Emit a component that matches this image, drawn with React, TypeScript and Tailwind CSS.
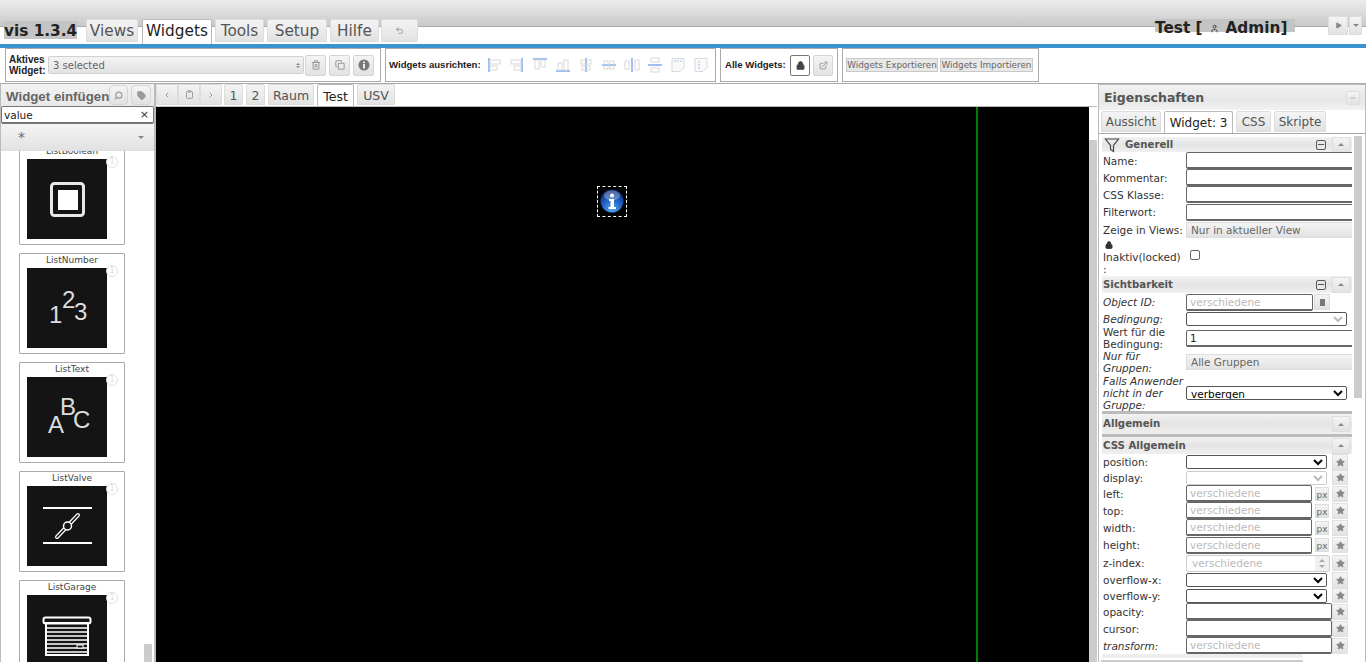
import React from "react";
import { Trash2, Copy, Lock, ExternalLink, Search, Tag, ChevronLeft, ChevronRight, Undo2, Play, User, Star, Minus, Clipboard } from "lucide-react";

const grad = "bg-[linear-gradient(#f4f4f4,#e2e2e2)]";

function TopTab({ w, label, active }: { w: number; label: React.ReactNode; active?: boolean }) {
  return (
    <div
      style={{ width: w }}
      className={
        active
          ? "h-[25px] pb-[2px] mr-[3px] bg-white border border-[#bbb] border-b-0 rounded-t-[2px] flex items-center justify-center text-[15.3px] text-[#222]"
          : `h-[23px] pt-[2px] mb-[2px] mr-[3px] ${grad} border border-[#ddd] rounded-t-[2px] flex items-center justify-center text-[15.3px] text-[#555]`
      }
    >
      {label}
    </div>
  );
}

function Btn({ w = 21, h = 21, children, dark }: { w?: number; h?: number; children?: React.ReactNode; dark?: boolean }) {
  return (
    <div
      style={{ width: w, height: h }}
      className={
        dark
          ? "bg-white border border-[#777] rounded-[2px] flex items-center justify-center text-[#444]"
          : `${grad} border border-[#d4d4d4] rounded-[2px] flex items-center justify-center text-[#999]`
      }
    >
      {children}
    </div>
  );
}

const blue = "#9cc0f2";
const gr = "#d8d8d8";
function AlignIcon({ kind }: { kind: number }) {
  const shapes: Record<number, React.ReactNode> = {
    0: <><rect x="2" y="1" width="2" height="14" fill={blue} /><rect x="4" y="3" width="10" height="4" fill="none" stroke={gr} /><rect x="4" y="9" width="7" height="4" fill="none" stroke={gr} /></>,
    1: <><rect x="12" y="1" width="2" height="14" fill={blue} /><rect x="2" y="3" width="10" height="4" fill="none" stroke={gr} /><rect x="5" y="9" width="7" height="4" fill="none" stroke={gr} /></>,
    2: <><rect x="1" y="1" width="14" height="2" fill={blue} /><rect x="3" y="3" width="4" height="9" fill="none" stroke={gr} /><rect x="9" y="3" width="4" height="7" fill="none" stroke={gr} /></>,
    3: <><rect x="1" y="13" width="14" height="2" fill={blue} /><rect x="3" y="6" width="4" height="7" fill="none" stroke={gr} /><rect x="9" y="3" width="4" height="10" fill="none" stroke={gr} /></>,
    4: <><rect x="7" y="1" width="2" height="14" fill={blue} /><rect x="3" y="3" width="10" height="4" fill="none" stroke={gr} /><rect x="4" y="9" width="8" height="4" fill="none" stroke={gr} /></>,
    5: <><rect x="1" y="7" width="14" height="2" fill={blue} /><rect x="3" y="4" width="4" height="8" fill="none" stroke={gr} /><rect x="9" y="4" width="4" height="8" fill="none" stroke={gr} /></>,
    6: <><rect x="7" y="1" width="2" height="14" fill={blue} /><rect x="1" y="4" width="4" height="8" fill="none" stroke={gr} /><rect x="11" y="3" width="4" height="10" fill="none" stroke={gr} /></>,
    7: <><rect x="1" y="7" width="14" height="2" fill={blue} /><rect x="4" y="1" width="8" height="4" fill="none" stroke={gr} /><rect x="4" y="11" width="8" height="4" fill="none" stroke={gr} /></>,
    8: <><path d="M2 1.5h12v9l-4 4H2z" fill="#fafafa" stroke={gr} /><path d="M4 4h8" stroke={blue} strokeDasharray="2 1" /></>,
    9: <><path d="M2 1.5h12v9l-4 4H2z" fill="#fafafa" stroke={gr} /><path d="M6 4v8" stroke={blue} strokeDasharray="2 1" /></>,
  };
  return <svg width="16" height="16" viewBox="0 0 16 16" className="w-[16px] h-[16px] mr-[7px] shrink-0">{shapes[kind]}</svg>;
}

function CenterTab({ w, label, active, big }: { w: number; label: React.ReactNode; active?: boolean; big?: boolean }) {
  const size = big ? "text-[12.5px] pt-[3px]" : "text-[12px]";
  return (
    <div
      style={{ width: w }}
      className={
        active
          ? `h-[22px] mr-[3px] bg-white border border-[#bbb] border-b-0 rounded-t-[2px] flex items-center justify-center ${size} text-[#222]`
          : `h-[21px] mb-[1px] mr-[3px] ${grad} border border-[#ddd] rounded-t-[2px] flex items-center justify-center ${size} text-[#555]`
      }
    >
      {label}
    </div>
  );
}

function Card({ name, children }: { name: string; children: React.ReactNode }) {
  return (
    <div className="relative w-[106px] h-[101px] mb-[8px] border border-[#aaa] rounded-[1px] shrink-0">
      <div className="h-[14px] text-[9px] leading-[13px] text-center text-[#444]">{name}</div>
      <div className="ml-[7px] w-[80px] h-[80px] bg-[#141414] overflow-hidden">{children}</div>
      <div className="absolute left-[86px] top-[11px] w-[12px] h-[12px] rounded-full border border-[#e2e2e2] text-[#ddd] text-[8px] leading-[10px] text-center">1</div>
    </div>
  );
}

function SectionHeader({ title, icon, minus, h = 17 }: { title: string; icon?: boolean; minus?: boolean; h?: number }) {
  return (
    <div style={{ height: h }} className="w-[250px] shrink-0 flex items-center bg-[linear-gradient(#f2f2f2,#e4e4e4_50%,#f0f0f0)] pr-[2px]">
      {icon && (
        <svg width="16" height="16" viewBox="0 0 16 16" className="ml-[2px] mr-[4px] shrink-0">
          <path d="M1.5 2h13L9.5 8.5V14.5L6.5 12.5V8.5z" fill="none" stroke="#444" strokeWidth="1.2" />
        </svg>
      )}
      <span className="ml-[1px] text-[10.2px] font-bold text-[#555]">{title}</span>
      <div className="flex-1" />
      {minus && (
        <div className="w-[10px] h-[10px] mr-[6px] border border-[#555] rounded-[2px] flex items-center justify-center">
          <div className="w-[6px] h-px bg-[#555]" />
        </div>
      )}
      <div className={`w-[18px] h-[16px] ${grad} border border-[#ddd] flex items-center justify-center`}>
        <div className="w-0 h-0 border-x-[3px] border-x-transparent border-b-[3px] border-b-[#888]" />
      </div>
    </div>
  );
}

function Row({ label, h = 17, italic, children }: { label: React.ReactNode; h?: number; italic?: boolean; children?: React.ReactNode }) {
  return (
    <div style={{ height: h }} className="w-[250px] shrink-0 flex items-center overflow-hidden">
      <div className={`w-[84px] shrink-0 pl-px text-[10.5px] leading-[12px] text-[#333] ${italic ? "italic" : ""}`}>{label}</div>
      <div className="flex-1 min-w-0 flex items-center">{children}</div>
    </div>
  );
}

function TextInput({ w = 180, value, ph, h = 17 }: { w?: number; value?: string; ph?: string; h?: number }) {
  return (
    <input
      readOnly
      value={value}
      placeholder={ph}
      style={{ width: w, height: h }}
      className="shrink-0 bg-white border border-[#666] border-b-[2px] rounded-[2px] px-[3px] text-[10.5px] text-[#222] placeholder:text-[#bbb] outline-none"
    />
  );
}

function PhInput({ w = 126 }: { w?: number }) {
  return <TextInput w={w} ph="verschiedene" />;
}

function Sel({ w, value = "", disabled, dark }: { w: number; value?: string; disabled?: boolean; dark?: boolean }) {
  return (
    <select
      disabled={disabled}
      defaultValue={value}
      style={{ width: w }}
      className={`h-[14px] shrink-0 bg-white border rounded-[2px] text-[10.5px] leading-[12px] text-black appearance-auto disabled:text-[#bbb] ${dark ? "border-[#555]" : "border-[#555] disabled:border-[#ccc]"}`}
    >
      <option value={value}>{value}</option>
    </select>
  );
}

function GreyField({ text }: { text: string }) {
  return (
    <div className={`w-[180px] h-[16px] ${grad} border-y border-l border-[#ddd] pl-[4px] text-[10.5px] leading-[14px] text-[#666] whitespace-nowrap`}>
      {text}
    </div>
  );
}

function StarBtn() {
  return (
    <div className={`ml-auto mr-[4px] w-[16px] h-[16px] ${grad} border border-[#e0e0e0] flex items-center justify-center shrink-0`}>
      <Star size={9} className="text-[#888] fill-[#888]" />
    </div>
  );
}

function Px() {
  return <div className={`ml-[3px] w-[14px] h-[14px] ${grad} border border-[#ddd] text-[9px] leading-[14px] text-[#666] text-center shrink-0`}>px</div>;
}

export default function App() {
  return (
    <div className="w-[1366px] h-[662px] overflow-hidden bg-white flex flex-col font-['DejaVu_Sans',sans-serif]">
      {/* header */}
      <div className="h-[44px] shrink-0 flex items-start bg-[linear-gradient(#ececec_0,#c9c9c9_26px,#aaa_26px,#aaa_27px,#fff_27px)]">
        <div className="ml-[4px] mt-[21px] h-[18px] w-[73px] bg-[#c4c4c4] text-[15.3px] leading-[20px] font-bold text-[#222] whitespace-nowrap">vis 1.3.4</div>
        <div className="ml-[9px] mt-[19px] h-[25px] flex items-start">
          <TopTab w={52} label="Views" />
          <div className="w-[1px]" />
          <TopTab w={70} label="Widgets" active />
          <TopTab w={49} label="Tools" />
          <TopTab w={60} label="Setup" />
          <TopTab w={49} label="Hilfe" />
          <div className={`-ml-px w-[37px] h-[23px] ${grad} border border-[#ddd] rounded-[2px] flex items-center justify-center text-[#999]`}>
            <Undo2 size={9} strokeWidth={2.5} />
          </div>
        </div>
        <div className="flex-1" />
        <div className="mt-[19px] mr-[33px] h-[13px] w-[140px] bg-[#c4c4c4] flex">
          <div className="h-[18px] text-[15.3px] leading-[18px] font-bold text-[#222] whitespace-nowrap flex items-center">
            Test [<User size={9} strokeWidth={2.5} className="mx-[7px] text-[#444]" />Admin]
          </div>
        </div>
        <div className={`mt-[16px] w-[20px] h-[19px] ${grad} border border-[#ddd] flex items-center justify-center`}>
          <Play size={7} className="text-[#888] fill-[#888]" />
        </div>
        <div className={`mt-[16px] ml-px mr-[4px] w-[13px] h-[19px] ${grad} border border-[#ddd] flex items-center justify-center`}>
          <div className="w-0 h-0 border-x-[3px] border-x-transparent border-t-[3px] border-t-[#888]" />
        </div>
      </div>
      <div className="h-[4px] shrink-0 bg-[#3a92d0]" />

      {/* toolbar */}
      <div className="h-[36px] shrink-0 border-b border-[#aaa] pl-[5px] flex items-start gap-[4px]">
        <div className="w-[376px] h-[34px] border border-[#aaa] flex items-center">
          <div className="ml-[3px] w-[39px] font-['Liberation_Sans',sans-serif] text-[10px] leading-[11px] font-bold text-[#222]">Aktives Widget:</div>
          <div className={`w-[256px] h-[18px] ${grad} border border-[#d0d0d0] rounded-[2px] flex items-center pl-[4px] text-[10px] text-[#666]`}>
            3 selected
            <div className="ml-auto mr-[3px] flex flex-col gap-px">
              <div className="w-0 h-0 border-x-[2px] border-x-transparent border-b-[2px] border-b-[#888]" />
              <div className="w-0 h-0 border-x-[2px] border-x-transparent border-t-[2px] border-t-[#888]" />
            </div>
          </div>
          <div className="ml-px flex gap-[3px]">
            <Btn><Trash2 size={10} strokeWidth={2.5} /></Btn>
            <Btn><Copy size={10} strokeWidth={2.5} /></Btn>
            <Btn>
              <svg viewBox="0 0 12 12" className="w-[12px] h-[12px]">
                <circle cx="6" cy="6" r="5.5" fill="#777" />
                <rect x="5" y="5" width="2" height="4.5" fill="#eee" />
                <rect x="5" y="2.5" width="2" height="1.6" fill="#eee" />
              </svg>
            </Btn>
          </div>
        </div>
        <div className="w-[331px] h-[34px] border border-[#aaa] flex items-center">
          <div className="ml-[3px] w-[97px] shrink-0 font-['Liberation_Sans',sans-serif] text-[9.6px] font-bold text-[#222] whitespace-nowrap">Widgets ausrichten:</div>
          {[0, 1, 2, 3, 4, 5, 6, 7, 8, 9].map((k) => (
            <AlignIcon key={k} kind={k} />
          ))}
        </div>
        <div className="w-[118px] h-[34px] border border-[#aaa] flex items-center">
          <div className="ml-[4px] w-[65px] shrink-0 font-['Liberation_Sans',sans-serif] text-[9.6px] font-bold text-[#222] whitespace-nowrap">Alle Widgets:</div>
          <Btn w={20} dark><Lock size={9} strokeWidth={3} className="fill-[#444]" /></Btn>
          <div className="ml-[3px]"><Btn w={20}><ExternalLink size={9} strokeWidth={2.5} /></Btn></div>
        </div>
        <div className="w-[197px] h-[34px] border border-[#aaa] flex items-center pl-[3px] gap-[2px]">
          <div className="w-[92px] h-[14px] bg-[#e8e8e8] border border-[#c8c8c8] text-[8.8px] leading-[13px] text-center text-[#666] whitespace-nowrap">Widgets Exportieren</div>
          <div className="w-[93px] h-[14px] bg-[#e8e8e8] border border-[#c8c8c8] text-[8.8px] leading-[13px] text-center text-[#666] whitespace-nowrap">Widgets Importieren</div>
        </div>
      </div>

      {/* main */}
      <div className="flex-1 min-h-0 flex">
        {/* left panel */}
        <div className="relative w-[156px] shrink-0 border-l border-r-2 border-[#bbb] flex flex-col overflow-hidden">
          <div className="h-[22px] shrink-0 flex items-center bg-[linear-gradient(#f2f2f2,#e8e8e8)]">
            <div className="ml-[5px] w-[103px] shrink-0 pt-[4px] font-['Liberation_Sans',sans-serif] text-[13.3px] leading-[16px] font-bold text-[#666] whitespace-nowrap">Widget einfügen</div>
            <div className="flex gap-[3px]">
              <div className={`w-[19px] h-[20px] ${grad} border border-[#d4d4d4] rounded-[4px] flex items-center justify-center text-[#999]`}><Search size={9} strokeWidth={3} className="-scale-x-100" /></div>
              <div className={`w-[20px] h-[20px] ${grad} border border-[#d4d4d4] rounded-[4px] flex items-center justify-center text-[#999]`}><Tag size={9} strokeWidth={3} className="fill-[#999]" /></div>
            </div>
          </div>
          <div className="h-[18px] shrink-0 pt-[2px] bg-white border border-[#777] border-b-[2px] rounded-[2px] flex items-center pl-[2px] pr-[4px] text-[10.5px] text-[#222]">
            value<span className="ml-auto text-[11px] text-[#333]">×</span>
          </div>
          <div className={`h-[27px] shrink-0 ${grad} border-b border-[#ddd] flex items-center pl-[17px] pr-[10px] text-[#667] text-[14px]`}>
            *
            <div className="ml-auto w-0 h-0 border-x-[3px] border-x-transparent border-t-[3px] border-t-[#888]" />
          </div>
          <div className="flex-1 min-h-0 overflow-hidden pl-[18px]">
            <div className="-mt-[7px] flex flex-col">
              <Card name="ListBoolean">
                <svg viewBox="0 0 80 80" className="w-[80px] h-[80px]">
                  <rect x="24.5" y="24.5" width="32" height="32" rx="3" fill="none" stroke="#e8e8e8" strokeWidth="3" />
                  <rect x="31" y="31" width="20" height="20" fill="#fff" />
                </svg>
              </Card>
              <Card name="ListNumber">
                <svg viewBox="0 0 80 80" className="w-[80px] h-[80px]" fontFamily="Liberation Sans" fill="#ddd">
                  <text x="22" y="55" fontSize="24">1</text>
                  <text x="35" y="40" fontSize="24">2</text>
                  <text x="47" y="52" fontSize="24">3</text>
                </svg>
              </Card>
              <Card name="ListText">
                <svg viewBox="0 0 80 80" className="w-[80px] h-[80px]" fontFamily="Liberation Sans" fill="#ddd">
                  <text x="21" y="56" fontSize="24">A</text>
                  <text x="33" y="38" fontSize="24">B</text>
                  <text x="46" y="51" fontSize="24">C</text>
                </svg>
              </Card>
              <Card name="ListValve">
                <svg viewBox="0 0 80 80" className="w-[80px] h-[80px]">
                  <path d="M16 22H65M16 57H65" stroke="#fff" strokeWidth="2" />
                  <path d="M30 51L51 29" stroke="#fff" strokeWidth="4" strokeLinecap="round" />
                  <path d="M30 51L51 29" stroke="#141414" strokeWidth="1.6" strokeLinecap="round" />
                  <circle cx="40.5" cy="40" r="4" fill="#141414" stroke="#fff" strokeWidth="1.5" />
                </svg>
              </Card>
              <Card name="ListGarage">
                <svg viewBox="0 0 80 80" className="w-[80px] h-[80px]">
                  <rect x="16.5" y="22.5" width="47" height="6" rx="2" fill="none" stroke="#fff" strokeWidth="2" />
                  <rect x="19" y="28" width="42" height="32" fill="none" stroke="#fff" strokeWidth="2" />
                  <path d="M20 33H60M20 37H60M20 41H60M20 45H60M20 49H60M20 53H60M20 57H60" stroke="#fff" strokeWidth="1.5" />
                  <rect x="50" y="50" width="6" height="3" fill="#141414" stroke="#fff" strokeWidth="1" />
                </svg>
              </Card>
            </div>
          </div>
          <div className="absolute left-[143px] top-[560px] w-[8px] h-[18px] bg-[#ccc]" />
        </div>

        {/* centre */}
        <div className="w-[941px] shrink-0 flex flex-col">
          <div className="h-[23px] shrink-0 border-b border-[#bbb] flex items-end">
            <div className="flex mr-[2px] mb-px">
              <div className={`w-[22px] h-[21px] ${grad} border border-[#ddd] flex items-center justify-center text-[#999]`}><ChevronLeft size={8} strokeWidth={3} /></div>
              <div className={`w-[22px] h-[21px] ${grad} border border-[#ddd] flex items-center justify-center text-[#999]`}><Clipboard size={9} strokeWidth={2.5} /></div>
              <div className={`w-[22px] h-[21px] ${grad} border border-[#ddd] flex items-center justify-center text-[#999]`}><ChevronRight size={8} strokeWidth={3} /></div>
            </div>
            <CenterTab big w={19} label="1" />
            <CenterTab big w={19} label="2" />
            <CenterTab big w={46} label="Raum" />
            <CenterTab big w={37} label="Test" active />
            <CenterTab big w={38} label="USV" />
          </div>
          <div className="flex-1 min-h-0 flex">
            <div className="relative w-[933px] bg-black">
              <div className="absolute left-[820px] top-0 bottom-0 w-[2px] bg-[#008000]" />
              <div className="absolute left-[441px] top-[79px] w-[30px] h-[31px] border border-dashed border-white flex items-center justify-center">
                <svg viewBox="0 0 24 24" className="w-[24px] h-[24px] -mt-px">
                  <defs>
                    <radialGradient id="ig" cx="50%" cy="85%" r="75%">
                      <stop offset="0" stopColor="#5aa8ee" />
                      <stop offset="0.6" stopColor="#1c5fbe" />
                      <stop offset="1" stopColor="#0b2f7a" />
                    </radialGradient>
                  </defs>
                  <circle cx="12" cy="12" r="11.5" fill="url(#ig)" />
                  <ellipse cx="12" cy="6.5" rx="8" ry="5" fill="#fff" opacity="0.3" />
                  <circle cx="12" cy="6.5" r="2" fill="#fff" />
                  <path d="M9 10h5v8h2v2H8.5v-2h2v-6H9z" fill="#fff" />
                </svg>
              </div>
            </div>
            <div className="w-[8px] shrink-0 bg-white flex flex-col pt-[33px]">
              <div className="flex-1 bg-[#ccc]" />
            </div>
          </div>
        </div>

        {/* right panel */}
        <div className="relative w-[268px] shrink-0 border-x border-t border-[#bbb] ml-px flex flex-col overflow-hidden">
          <div className="h-[25px] shrink-0 pt-[1px] flex items-center bg-[linear-gradient(#f2f2f2,#e6e6e6_60%,#f2f2f2)]">
            <div className="ml-[5px] text-[12.5px] font-bold text-[#555]">Eigenschaften</div>
            <div className={`ml-auto mr-[5px] w-[14px] h-[14px] ${grad} border border-[#ddd] rounded-[2px] flex items-center justify-center`}>
              <Minus size={8} className="text-[#999]" />
            </div>
          </div>
          <div className="h-[24px] shrink-0 border-b border-[#aaa] flex items-end pl-[2px]">
            <CenterTab w={60} label="Aussicht" />
            <CenterTab w={69} label="Widget: 3" active />
            <CenterTab w={35} label="CSS" />
            <CenterTab w={52} label="Skripte" />
          </div>
          <div className="flex-1 min-h-0 flex pl-[3px] pt-[3px]">
            <div className="w-[250px] shrink-0 flex flex-col overflow-hidden">
              <SectionHeader title="Generell" icon minus h={15} />
              <Row label="Name:"><TextInput /></Row>
              <Row label="Kommentar:"><TextInput /></Row>
              <Row label="CSS Klasse:"><TextInput /></Row>
              <Row label="Filterwort:" h={18}><TextInput /></Row>
              <Row label="Zeige in Views:" h={17}><GreyField text="Nur in aktueller View" /></Row>
              <div className="h-[38px] w-[250px] shrink-0 flex text-[10.5px] leading-[12px] text-[#333]">
                <div className="w-[84px] pl-px pt-[1px]">
                  <Lock size={8} strokeWidth={3} className="ml-[2px] mb-[2px] mt-[2px] text-[#333] fill-[#333]" />
                  Inaktiv(locked)
                  <br />:
                </div>
                <input type="checkbox" readOnly className="w-[10px] h-[10px] ml-[4px] mt-[12px] appearance-none border border-[#666] rounded-[2px] bg-white" />
              </div>
              <SectionHeader title="Sichtbarkeit" minus />
              <Row label="Object ID:" italic h={18}>
                <TextInput w={127} ph="verschiedene" />
                <div className={`ml-[1px] w-[16px] h-[16px] ${grad} border border-[#ddd] flex items-center justify-center`}>
                  <div className="w-[5px] h-[7px] bg-[#777]" />
                </div>
              </Row>
              <Row label="Bedingung:" italic h={15}><Sel w={161} disabled dark /></Row>
              <Row label="Wert für die Bedingung:" h={24}><TextInput value="1" /></Row>
              <Row label="Nur für Gruppen:" italic h={24}><GreyField text="Alle Gruppen" /></Row>
              <Row label="Falls Anwender nicht in der Gruppe:" italic h={37}><Sel w={161} value="verbergen" /></Row>
              <div className="h-[3px] shrink-0 bg-[#bbb]" />
              <SectionHeader title="Allgemein" h={20} />
              <div className="h-[3px] shrink-0 bg-[#bbb]" />
              <SectionHeader title="CSS Allgemein" h={17} />
              <Row label="position:" h={16}><Sel w={141} /><StarBtn /></Row>
              <Row label="display:" h={15}><Sel w={141} disabled /><StarBtn /></Row>
              <Row label="left:"><PhInput /><Px /><StarBtn /></Row>
              <Row label="top:"><PhInput /><Px /><StarBtn /></Row>
              <Row label="width:"><PhInput /><Px /><StarBtn /></Row>
              <Row label="height:" h={18}><PhInput /><Px /><StarBtn /></Row>
              <Row label="z-index:" h={18}>
                <div className="w-[144px] h-[17px] border border-[#ccc] rounded-[2px] pl-[5px] text-[10.5px] leading-[15px] text-[#bbb] flex">
                  verschiedene
                  <div className="ml-auto w-[14px] flex flex-col items-center justify-center gap-[3px] bg-[#f0f0f0]">
                    <div className="w-0 h-0 border-x-[3px] border-x-transparent border-b-[3px] border-b-[#aaa]" />
                    <div className="w-0 h-0 border-x-[3px] border-x-transparent border-t-[3px] border-t-[#aaa]" />
                  </div>
                </div>
                <StarBtn />
              </Row>
              <Row label="overflow-x:" h={16}><Sel w={141} /><StarBtn /></Row>
              <Row label="overflow-y:" h={15}><Sel w={141} /><StarBtn /></Row>
              <Row label="opacity:"><TextInput w={146} /><StarBtn /></Row>
              <Row label="cursor:"><TextInput w={146} /><StarBtn /></Row>
              <Row label="transform:" italic><TextInput w={146} ph="verschiedene" /><StarBtn /></Row>
              <div className="h-[4px] w-[200px] shrink-0 bg-[#eee]" />
            </div>
            <div className="ml-[2px] -mt-px w-[8px] h-[262px] bg-[#ccc] shrink-0" />
          </div>
          <div className="absolute left-[2px] bottom-0 w-[202px] h-[2px] bg-[#ccc]" />
        </div>
      </div>
    </div>
  );
}
